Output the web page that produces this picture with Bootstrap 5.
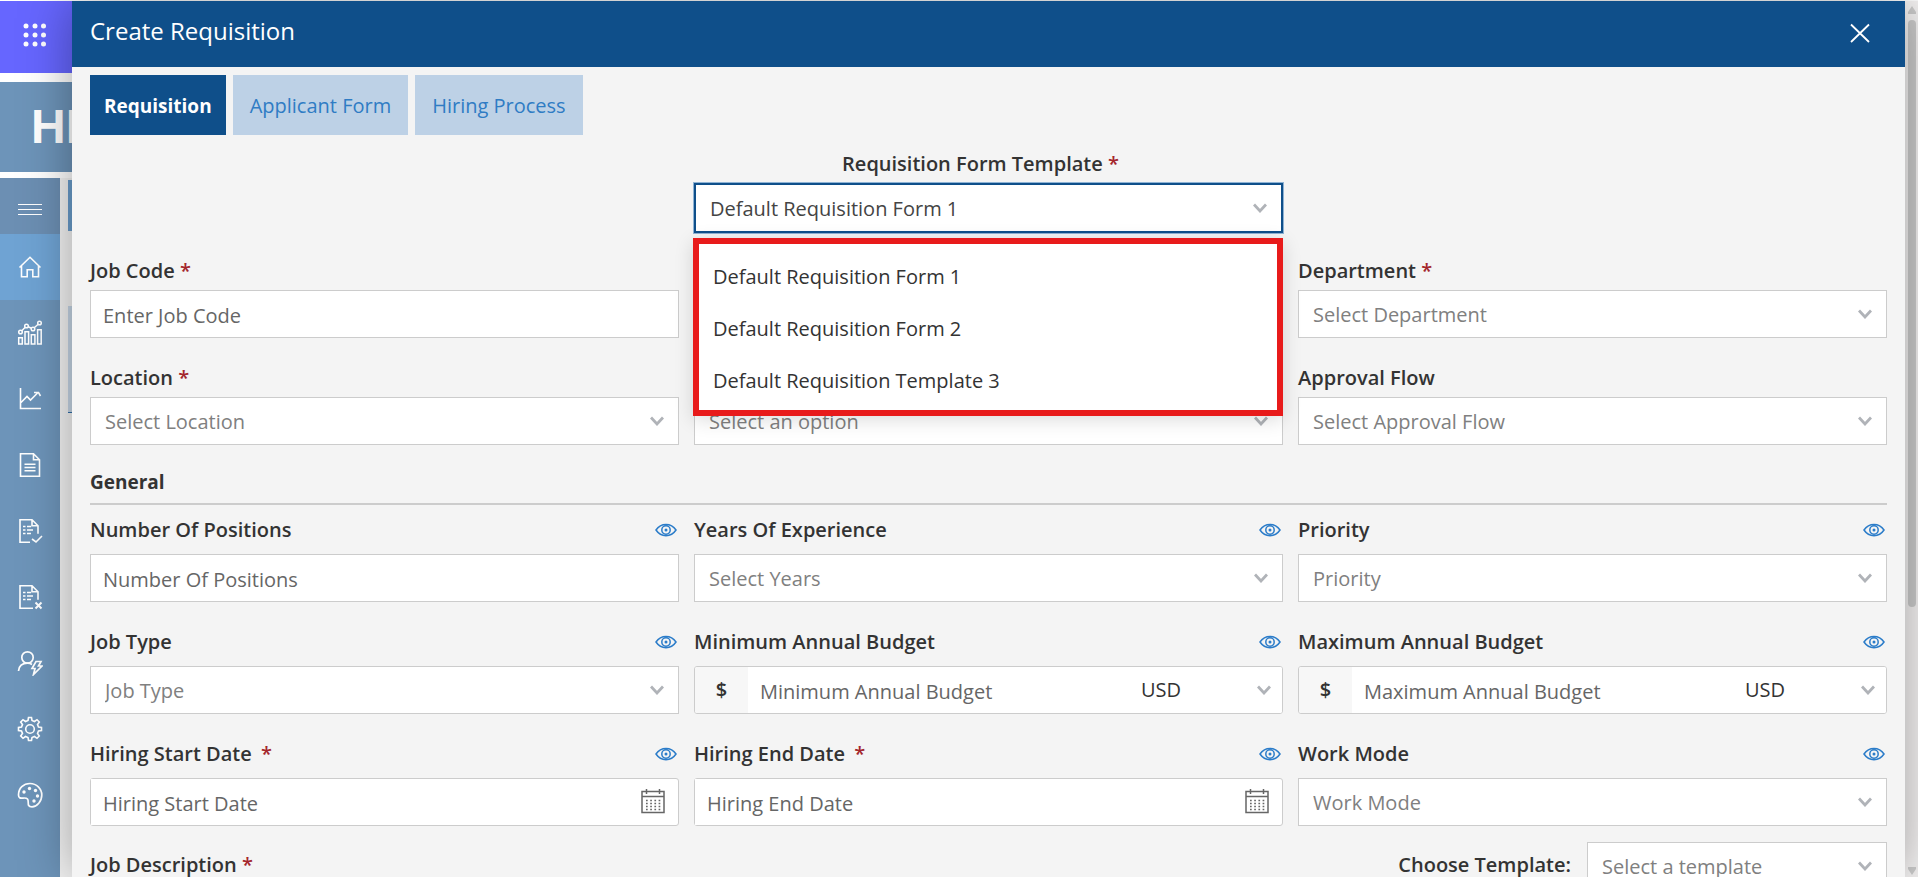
<!DOCTYPE html>
<html lang="en">
<head>
<meta charset="utf-8">
<meta name="viewport" content="width=device-width, initial-scale=1">
<title>Create Requisition</title>
<link href="https://cdn.jsdelivr.net/npm/bootstrap@5.3.0/dist/css/bootstrap.min.css" rel="stylesheet">
<style>
  body { font-family: "Open Sans", "Noto Sans", sans-serif; font-size: 20px; color: #333; background: #fff; }
  a { text-decoration: none; }

  /* Page behind the drawer */
  .app { padding-top: 1px; }
  .rail { width: 72px; flex: none; overflow: hidden; }
  .waffle { height: 72px; background: #66f; border: 0; padding: 0 18px 4px; }
  .brand-bar { height: 90px; margin-top: 9px; padding-left: 31px; background: #6d94b9; color: #fff; font-family: "Liberation Sans", sans-serif; font-size: 48px; line-height: 90px; font-weight: 700; }
  .rail-lower { margin-top: 6px; background: #f4f4f4; }
  .side-nav { width: 60px; background: #6d94b9; }
  .side-nav .nav-link { height: 66px; padding: 0; color: #fff; display: flex; align-items: center; justify-content: center; }
  .side-nav .menu-toggle { height: 56px; padding: 7px 0 0; background: #6c8fb3; }
  .side-nav .active { background: #6fa3d3; }
  .behind { width: 4px; margin-left: 8px; }
  .behind-a { height: 51px; margin-top: 2px; background: #6a9dcc; }
  .behind-b { height: 107px; margin-top: 75px; background: #c6d6e6; border-bottom: 1px solid #2f6ea8; }

  /* Drawer */
  .drawer { min-width: 0; background: #f4f4f4; box-shadow: 0 0 48px rgba(0,0,0,.36); z-index: 1; }
  .drawer-head { height: 66px; background: #0f4f8a; color: #fff; padding: 0 34px 2px 18px; }
  .drawer-head h1 { font-size: 24px; font-weight: 400; line-height: 28px; }
  .drawer-body { padding: 8px 18px 0; }
  .tabs { gap: 7px; }
  .tabs .nav-link { height: 60px; border-radius: 0; padding: 0 17px; line-height: 62px; background: #bdd1e6; color: #2f7cc4; }
  .tabs .nav-link.active { background: #0f4f8a; color: #fff; font-size: 19px; font-weight: 700; padding: 0 14px; }

  .fields { display: grid; grid-template-columns: repeat(3, 1fr); column-gap: 15px; row-gap: 26px; }
  .fields label, .lbl { font-weight: 600; line-height: 28px; }
  .req { color: #a4262c; }
  .tight { margin-bottom: 5px; }
  .roomy { margin-bottom: 10px; }
  .eye { width: 22px; height: 14px; color: #2b7cc9; margin-right: 2px; }

  .form-control, .form-select { height: 48px; border: 1px solid #ccc; border-radius: 0; font-size: 20px; padding: 2px 12px 0; background-color: #fff; color: #333; }
  .form-control::placeholder { color: #666; opacity: 1; }
  .form-select { color: #808080; padding: 2px 40px 0 14px;
    background-image: url("data:image/svg+xml,%3Csvg xmlns='http://www.w3.org/2000/svg' viewBox='0 0 14 10'%3E%3Cpath d='M1 1.500 7 8l6-6.500' fill='none' stroke='%23b0b3b8' stroke-width='2.800'/%3E%3C/svg%3E");
    background-size: 14px 10px; background-position: right 14px top 18px; }
  .form-select.chosen { height: 50px; border: 2px solid #0f4f8a; color: #444; box-shadow: 0 0 0 1px #8fb3d4; }
  .template-row { margin-top: 15px; }
  .options { top: 55px; left: -1px; right: 0; border: 6px solid #e81b1b; background: #fff; padding: 7px 0 3px; box-shadow: 0 4px 18px rgba(0,0,0,.14); z-index: 5; }
  .options button { height: 52px; padding: 0 14px; border: 0; background: none; color: #333; text-align: left; }
  .money { height: 48px; border: 1px solid #ccc; border-radius: 3px; background: #fff; overflow: hidden; }
  .money .sign { width: 53px; background: #f7f7f7; font-weight: 600; }
  .money .form-control, .money .form-select { border: 0; height: 46px; }
  .money .form-select { width: 155px; flex: none; color: #333; background-position: right 11px top 18px; padding-top: 0; }
  .date { height: 48px; margin-top: 1px; margin-bottom: -1px; border: 1px solid #ccc; border-radius: 3px; background: #fff; }
  .date .form-control { border: 0; height: 46px; }
  .date button { border: 0; background: none; padding: 0 12px 2px 0; line-height: 0; }
  .section-title { margin: 23px 0 11px; padding-bottom: 7px; border-bottom: 2px solid #ccc; font-size: 19px; font-weight: 700; line-height: 28px; }
  .last-row { margin-top: 16px; }
  .last-row .form-select { width: 300px; }
  .last-row .lbl { padding-bottom: 2px; }

  .track { width: 13px; flex: none; background: #f6f4f4; padding: 5px 2px 2px 3px; }
  .thumb { width: 8px; margin-top: 6px; border-radius: 4px; background: #cdcdcd; }
</style>
</head>
<body>
<svg class="d-none">
  <symbol id="eye" viewBox="0 0 22 14"><g fill="none" stroke="currentColor" stroke-width="1.500"><path d="M1 7c5-7.500 15-7.500 20 0-5 7.500-15 7.500-20 0z"/><circle cx="11" cy="7" r="4.200"/></g><circle cx="11" cy="7" r="1.500" fill="currentColor"/></symbol>
  <symbol id="cal" viewBox="0 0 26 26"><path d="M2 3.500h22v21H2zM2 8.500h22M6.500 1v5M19.500 1v5" fill="none" stroke="#666" stroke-width="1.500"/><path d="M6 12.500h15M6 15.500h15M6 18.500h15M6 21.500h15" fill="none" stroke="#666" stroke-width="1.600" stroke-dasharray="1.700 2.500"/></symbol>
</svg>
<div class="app d-flex vh-100 overflow-hidden">
  <aside class="rail d-flex flex-column">
    <button class="waffle flex-shrink-0 d-flex align-items-center" aria-label="Apps">
      <svg class="ms-1" width="24" height="24" fill="#fff"><circle cx="4" cy="3" r="2.500"/><circle cx="13" cy="3" r="2.500"/><circle cx="21.500" cy="3" r="2.500"/><circle cx="4" cy="12" r="2.500"/><circle cx="13" cy="12" r="2.500"/><circle cx="21.500" cy="12" r="2.500"/><circle cx="4" cy="21" r="2.500"/><circle cx="13" cy="21" r="2.500"/><circle cx="21.500" cy="21" r="2.500"/></svg>
    </button>
    <div class="brand-bar flex-shrink-0">HR</div>
    <div class="rail-lower d-flex flex-grow-1">
      <nav class="side-nav nav flex-column flex-nowrap">
        <a class="nav-link menu-toggle" href="#" aria-label="Menu"><svg width="24" height="12" stroke="#fff"><path d="M0 .5h24M0 5.500h24M0 10.500h24"/></svg></a>
        <a class="nav-link active" href="#" aria-label="Home"><svg width="24" height="24" fill="none" stroke="#fff" stroke-width="1.600"><path d="M1.500 12.500 12 2.300 22.500 12.500M3.500 10.500v11.200h5.700v-7h5.600v7h5.700V10.500"/></svg></a>
        <a class="nav-link" href="#" aria-label="Analytics"><svg width="26" height="26" fill="none" stroke="#fff" stroke-width="1.500"><path d="M1.700 17.700h3.600V24H1.700zM8 11.700h3.600V24H8zM14.300 14.700h3.600V24h-3.600zM20.600 9.700h3.600V24h-3.600z"/><circle cx="3.500" cy="12" r="1.800"/><circle cx="9.500" cy="6" r="1.800"/><circle cx="16" cy="9" r="1.800"/><circle cx="22.500" cy="3" r="1.800"/><path d="m4.800 10.700 3.400-3.400M11.200 6.800l3.200 1.500M17.200 7.700l4-3.500"/></svg></a>
        <a class="nav-link" href="#" aria-label="Trends"><svg width="24" height="24" fill="none" stroke="#fff" stroke-width="1.600"><path d="M2.500 1v20.500H23M3 15.500l6-6 3.500 3.500L20 5.500M16 5.500h4.500L22.500 9"/></svg></a>
        <a class="nav-link" href="#" aria-label="Documents"><svg width="24" height="26" fill="none" stroke="#fff" stroke-width="1.600"><path d="M2.500 1.800h13l6 6v16.400h-19zM15.500 1.800v6h6M6.500 12.200h11M6.500 15.500h11M6.500 18.800h11"/></svg></a>
        <a class="nav-link" href="#" aria-label="Approved"><svg width="26" height="26" fill="none" stroke="#fff" stroke-width="1.600"><path d="M13 24.200H3V1.800h12l6 6v8M15 1.800v6h6M6 8.500h2.500M10 8.500h4M6 12h2.500M10 12h6M6 15.500h2.500M10 15.500h4M15 21l4 3 6-6"/></svg></a>
        <a class="nav-link" href="#" aria-label="Rejected"><svg width="26" height="26" fill="none" stroke="#fff" stroke-width="1.600"><path d="M16 24.200H3V1.800h12l6 6v8M15 1.800v6h6M6 8.500h2.500M10 8.500h4M6 12h2.500M10 12h6M6 15.500h2.500M10 15.500h4"/><path d="m18.500 18.500 6 6m0-6-6 6" stroke-width="2"/></svg></a>
        <a class="nav-link" href="#" aria-label="User actions"><svg width="26" height="26" fill="none" stroke="#fff" stroke-width="1.700"><circle cx="10.500" cy="7.500" r="5.700"/><path d="M1.500 21c.5-5 4-7.800 9-7.800 2 0 3 .3 4.500 1.300M19 11.500h5l-2.500 4.500H25l-8.500 8.500 1.500-6h-3z"/></svg></a>
        <a class="nav-link" href="#" aria-label="Settings"><svg width="26" height="26" fill="none" stroke="#fff" stroke-width="1.600"><circle cx="13" cy="13" r="4.300"/><path d="M11 4.500 11.500 1.500h3L15 4.500l2.500 1 2.500-1.800 2.300 2.300L20.500 8.500l1 2.500 3 .5v3l-3 .5-1 2.500 1.800 2.500-2.300 2.300-2.500-1.800-2.500 1-.5 3h-3l-.5-3-2.500-1L6 22.300 3.700 20l1.800-2.500-1-2.500-3-.5v-3l3-.5 1-2.500L3.700 6 6 3.700l2.500 1.800z"/></svg></a>
        <a class="nav-link" href="#" aria-label="Theme"><svg width="26" height="26" fill="none" stroke="#fff" stroke-width="1.700"><path d="M1.500 13C1.500 6 6.500 1.500 13 1.500S24.800 6.800 24.800 13 20 24.800 15 24.800c-6 0-2.500-5.300-4.500-7.800-2.500-3-9 2-9-4z"/><g fill="#fff" stroke="none"><circle cx="7" cy="10" r="1.700"/><circle cx="12.500" cy="6.500" r="1.700"/><circle cx="18.500" cy="8.500" r="1.700"/><circle cx="20.500" cy="14" r="1.700"/><circle cx="17" cy="19" r="1.700"/></g></svg></a>
      </nav>
      <div class="behind"><div class="behind-a"></div><div class="behind-b"></div></div>
    </div>
  </aside>

  <main class="drawer flex-grow-1 d-flex flex-column">
    <header class="drawer-head d-flex align-items-center justify-content-between flex-shrink-0">
      <h1 class="mb-1">Create Requisition</h1>
      <button class="btn p-0 border-0 d-flex" aria-label="Close"><svg width="22" height="20" stroke="#fff" stroke-width="1.800"><path d="m2 1.500 18 17.500M20 1.500 2 19"/></svg></button>
    </header>
    <form class="drawer-body">
      <nav class="tabs nav">
        <a class="nav-link active" href="#">Requisition</a>
        <a class="nav-link" href="#">Applicant Form</a>
        <a class="nav-link" href="#">Hiring Process</a>
      </nav>

      <div class="fields template-row">
        <div></div>
        <div>
          <label class="d-block text-center pe-3 tight" for="tpl">Requisition Form Template <span class="req">*</span></label>
          <div class="position-relative">
            <select class="form-select chosen" id="tpl"><option>Default Requisition Form 1</option></select>
            <div class="options position-absolute d-flex flex-column">
              <button type="button">Default Requisition Form 1</button>
              <button type="button">Default Requisition Form 2</button>
              <button type="button">Default Requisition Template 3</button>
            </div>
          </div>
        </div>
      </div>

      <div class="fields mt-4">
        <div><label class="d-block tight" for="code">Job Code <span class="req">*</span></label><input class="form-control" id="code" placeholder="Enter Job Code"></div>
        <div></div>
        <div><label class="d-block tight" for="dept">Department <span class="req">*</span></label><select class="form-select" id="dept"><option>Select Department</option></select></div>
        <div><label class="d-block tight" for="loc">Location <span class="req">*</span></label><select class="form-select" id="loc"><option>Select Location</option></select></div>
        <div class="d-flex align-items-end"><select class="form-select" aria-label="Option"><option>Select an option</option></select></div>
        <div><label class="d-block tight" for="flow">Approval Flow</label><select class="form-select" id="flow"><option>Select Approval Flow</option></select></div>
      </div>

      <h2 class="section-title">General</h2>

      <div class="fields">
        <div><div class="d-flex justify-content-between align-items-center roomy"><label for="pos">Number Of Positions</label><svg class="eye"><use href="#eye"/></svg></div><input class="form-control" id="pos" placeholder="Number Of Positions"></div>
        <div><div class="d-flex justify-content-between align-items-center roomy"><label for="yrs">Years Of Experience</label><svg class="eye"><use href="#eye"/></svg></div><select class="form-select" id="yrs"><option>Select Years</option></select></div>
        <div><div class="d-flex justify-content-between align-items-center roomy"><label for="pri">Priority</label><svg class="eye"><use href="#eye"/></svg></div><select class="form-select" id="pri"><option>Priority</option></select></div>

        <div><div class="d-flex justify-content-between align-items-center roomy"><label for="type">Job Type</label><svg class="eye"><use href="#eye"/></svg></div><select class="form-select" id="type"><option>Job Type</option></select></div>
        <div><div class="d-flex justify-content-between align-items-center roomy"><label for="min">Minimum Annual Budget</label><svg class="eye"><use href="#eye"/></svg></div>
          <div class="money d-flex"><span class="sign d-flex align-items-center justify-content-center flex-shrink-0">$</span><input class="form-control" id="min" placeholder="Minimum Annual Budget"><select class="form-select" aria-label="Currency"><option>USD</option></select></div></div>
        <div><div class="d-flex justify-content-between align-items-center roomy"><label for="max">Maximum Annual Budget</label><svg class="eye"><use href="#eye"/></svg></div>
          <div class="money d-flex"><span class="sign d-flex align-items-center justify-content-center flex-shrink-0">$</span><input class="form-control" id="max" placeholder="Maximum Annual Budget"><select class="form-select" aria-label="Currency"><option>USD</option></select></div></div>

        <div><div class="d-flex justify-content-between align-items-center roomy"><label for="start">Hiring Start Date <span class="req ms-1">*</span></label><svg class="eye"><use href="#eye"/></svg></div>
          <div class="date d-flex align-items-center"><input class="form-control" id="start" placeholder="Hiring Start Date"><button type="button" aria-label="Pick start date"><svg width="26" height="26"><use href="#cal"/></svg></button></div></div>
        <div><div class="d-flex justify-content-between align-items-center roomy"><label for="end">Hiring End Date <span class="req ms-1">*</span></label><svg class="eye"><use href="#eye"/></svg></div>
          <div class="date d-flex align-items-center"><input class="form-control" id="end" placeholder="Hiring End Date"><button type="button" aria-label="Pick end date"><svg width="26" height="26"><use href="#cal"/></svg></button></div></div>
        <div><div class="d-flex justify-content-between align-items-center roomy"><label for="mode">Work Mode</label><svg class="eye"><use href="#eye"/></svg></div><select class="form-select" id="mode"><option>Work Mode</option></select></div>
      </div>

      <div class="last-row d-flex justify-content-between align-items-center">
        <span class="lbl">Job Description <span class="req">*</span></span>
        <div class="d-flex align-items-center gap-3"><label class="lbl" for="choose">Choose Template:</label><select class="form-select" id="choose"><option>Select a template</option></select></div>
      </div>
    </form>
  </main>

  <div class="track d-flex flex-column align-items-center">
    <svg class="flex-shrink-0" width="8" height="8" fill="#cdcdcd"><path d="M4 0 8 6v2H0V6z"/></svg>
    <div class="thumb" style="height:67.500%"></div>
    <svg class="flex-shrink-0 mt-auto" width="8" height="8" fill="#cdcdcd"><path d="M0 0h8v2L4 8 0 2z"/></svg>
  </div>
</div>
<script src="https://cdn.jsdelivr.net/npm/bootstrap@5.3.0/dist/js/bootstrap.bundle.min.js"></script>
</body>
</html>
